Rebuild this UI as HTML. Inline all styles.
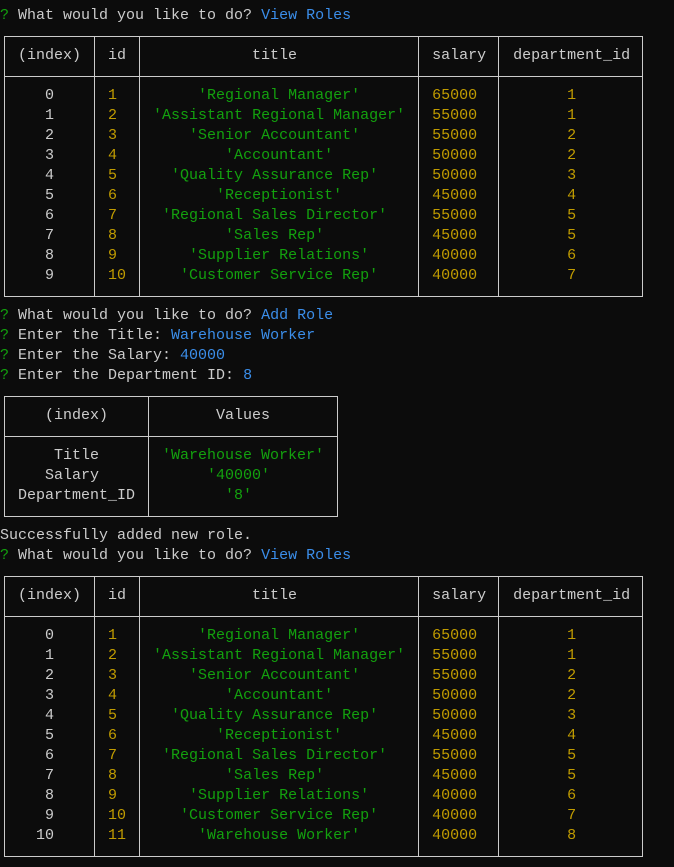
<!DOCTYPE html>
<html><head><meta charset="utf-8"><style>
html,body{margin:0;padding:0;background:#0c0c0c;width:674px;height:867px;overflow:hidden;position:relative}
pre{position:absolute;left:0;top:6px;margin:0;font-family:"Liberation Mono",monospace;font-size:15px;line-height:20px;color:#cccccc;white-space:pre}
g{color:#13a10e}y{color:#c19c00}b{color:#3b8eea;font-weight:normal}
.h{position:absolute;height:1px;background:#cccccc}
.v{position:absolute;width:1px;background:#cccccc}
</style></head><body>
<pre><g>?</g> What would you like to do? <b>View Roles</b>

  (index)   id              title               salary   department_id

     0     <y> 1   </y><g>      'Regional Manager'       </g><y> 65000   </y><y>       1       </y>
     1     <y> 2   </y><g> 'Assistant Regional Manager'  </g><y> 55000   </y><y>       1       </y>
     2     <y> 3   </y><g>     'Senior Accountant'       </g><y> 55000   </y><y>       2       </y>
     3     <y> 4   </y><g>         'Accountant'          </g><y> 50000   </y><y>       2       </y>
     4     <y> 5   </y><g>   'Quality Assurance Rep'     </g><y> 50000   </y><y>       3       </y>
     5     <y> 6   </y><g>        'Receptionist'         </g><y> 45000   </y><y>       4       </y>
     6     <y> 7   </y><g>  'Regional Sales Director'    </g><y> 55000   </y><y>       5       </y>
     7     <y> 8   </y><g>         'Sales Rep'           </g><y> 45000   </y><y>       5       </y>
     8     <y> 9   </y><g>     'Supplier Relations'      </g><y> 40000   </y><y>       6       </y>
     9     <y> 10  </y><g>    'Customer Service Rep'     </g><y> 40000   </y><y>       7       </y>

<g>?</g> What would you like to do? <b>Add Role</b>
<g>?</g> Enter the Title: <b>Warehouse Worker</b>
<g>?</g> Enter the Salary: <b>40000</b>
<g>?</g> Enter the Department ID: <b>8</b>

     (index)            Values

      Title      <g> 'Warehouse Worker'</g>
     Salary      <g>      '40000'</g>
  Department_ID  <g>        '8'</g>

Successfully added new role.
<g>?</g> What would you like to do? <b>View Roles</b>

  (index)   id              title               salary   department_id

     0     <y> 1   </y><g>      'Regional Manager'       </g><y> 65000   </y><y>       1       </y>
     1     <y> 2   </y><g> 'Assistant Regional Manager'  </g><y> 55000   </y><y>       1       </y>
     2     <y> 3   </y><g>     'Senior Accountant'       </g><y> 55000   </y><y>       2       </y>
     3     <y> 4   </y><g>         'Accountant'          </g><y> 50000   </y><y>       2       </y>
     4     <y> 5   </y><g>   'Quality Assurance Rep'     </g><y> 50000   </y><y>       3       </y>
     5     <y> 6   </y><g>        'Receptionist'         </g><y> 45000   </y><y>       4       </y>
     6     <y> 7   </y><g>  'Regional Sales Director'    </g><y> 55000   </y><y>       5       </y>
     7     <y> 8   </y><g>         'Sales Rep'           </g><y> 45000   </y><y>       5       </y>
     8     <y> 9   </y><g>     'Supplier Relations'      </g><y> 40000   </y><y>       6       </y>
     9     <y> 10  </y><g>    'Customer Service Rep'     </g><y> 40000   </y><y>       7       </y>
    10     <y> 11  </y><g>      'Warehouse Worker'       </g><y> 40000   </y><y>       8       </y>
</pre>
<div class="h" style="left:4px;width:639px;top:36px"></div>
<div class="h" style="left:4px;width:639px;top:76px"></div>
<div class="h" style="left:4px;width:639px;top:296px"></div>
<div class="v" style="left:4px;top:36px;height:261px"></div>
<div class="v" style="left:94px;top:36px;height:261px"></div>
<div class="v" style="left:139px;top:36px;height:261px"></div>
<div class="v" style="left:418px;top:36px;height:261px"></div>
<div class="v" style="left:498px;top:36px;height:261px"></div>
<div class="v" style="left:642px;top:36px;height:261px"></div>
<div class="h" style="left:4px;width:334px;top:396px"></div>
<div class="h" style="left:4px;width:334px;top:436px"></div>
<div class="h" style="left:4px;width:334px;top:516px"></div>
<div class="v" style="left:4px;top:396px;height:121px"></div>
<div class="v" style="left:148px;top:396px;height:121px"></div>
<div class="v" style="left:337px;top:396px;height:121px"></div>
<div class="h" style="left:4px;width:639px;top:576px"></div>
<div class="h" style="left:4px;width:639px;top:616px"></div>
<div class="h" style="left:4px;width:639px;top:856px"></div>
<div class="v" style="left:4px;top:576px;height:281px"></div>
<div class="v" style="left:94px;top:576px;height:281px"></div>
<div class="v" style="left:139px;top:576px;height:281px"></div>
<div class="v" style="left:418px;top:576px;height:281px"></div>
<div class="v" style="left:498px;top:576px;height:281px"></div>
<div class="v" style="left:642px;top:576px;height:281px"></div>
</body></html>
